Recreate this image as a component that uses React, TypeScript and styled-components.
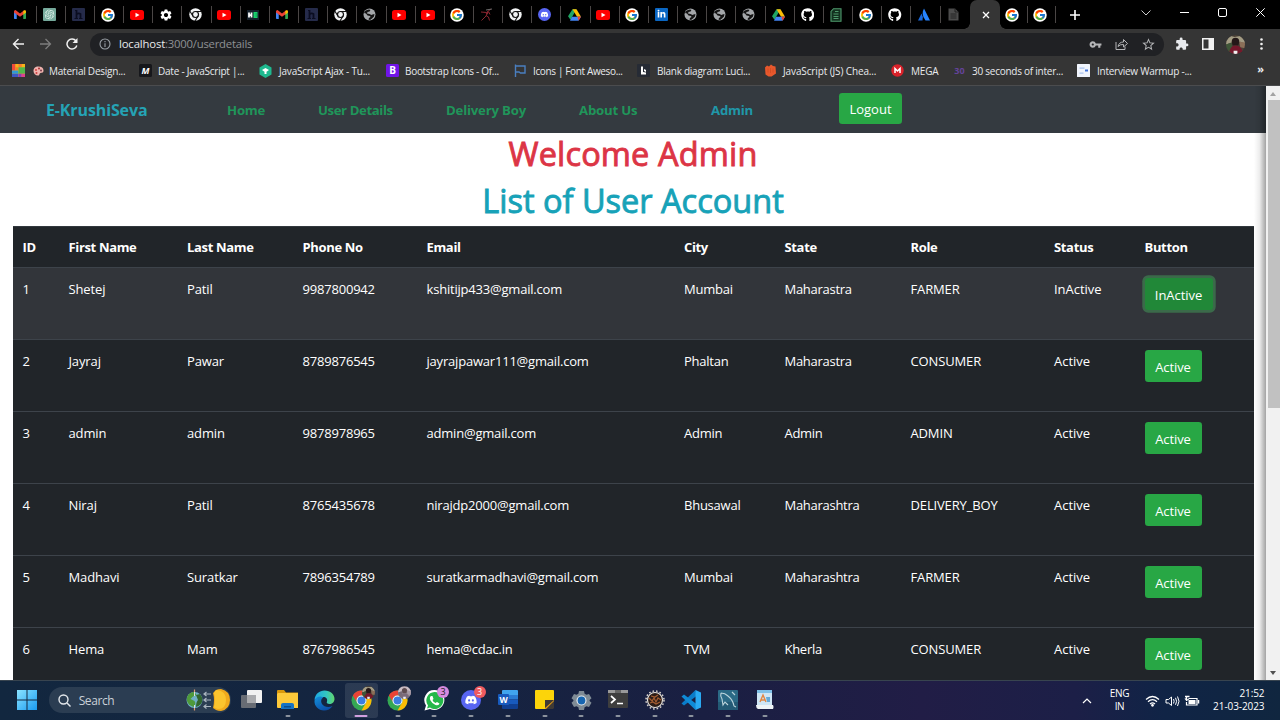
import React from 'react';
import styled, { createGlobalStyle, css } from 'styled-components';
import { FcGoogle } from 'react-icons/fc';
import { FaGithub, FaDiscord, FaLinkedinIn } from 'react-icons/fa';
import { MdExtension, MdVpnKey, MdStarBorder, MdSettings } from 'react-icons/md';
import { SiOpenai } from 'react-icons/si';

const Global = createGlobalStyle`
  * { box-sizing: border-box; }
  body { margin: 0; overflow: hidden; background: #fff; }
  svg { display: block; flex: none; }
`;

const font = css`font-family: 'Open Sans', 'Noto Sans', sans-serif;`;

const Screen = styled.div`
  ${font}
  width: 1280px;
  height: 720px;
  display: flex;
  flex-direction: column;
  overflow: hidden;
`;

/* ---------- browser chrome ---------- */
const TabStrip = styled.div`
  height: 29px;
  flex: none;
  background: #000;
  display: flex;
  align-items: stretch;
  padding-left: 7.5px;
  color: #fff;
`;
const Tab = styled.div<{ $line?: boolean; $w?: number }>`
  width: ${p => p.$w ?? 29.17}px;
  flex: none;
  display: flex;
  align-items: center;
  justify-content: center;
  padding-right: 4px;
  background: ${p => (p.$line === false ? 'none' : 'linear-gradient(#4a4645, #4a4645) no-repeat right 6px / 1px 17px')};
`;
const ActiveTab = styled.div`
  width: 30px;
  flex: none;
  display: flex;
  align-items: center;
  justify-content: center;
  background: #353535;
  border-radius: 7px 7px 0 0;
  padding-left: 3px;
  position: relative;
  &::before, &::after {
    content: '';
    position: absolute;
    bottom: 0;
    width: 6px;
    height: 6px;
  }
  &::before { left: -6px; background: radial-gradient(circle at 0 0, transparent 5.5px, #353535 6px); }
  &::after { right: -6px; background: radial-gradient(circle at 100% 0, transparent 5.5px, #353535 6px); }
`;
const NewTab = styled.div`
  width: 38px;
  display: flex;
  align-items: center;
  justify-content: center;
`;
const WindowControls = styled.div`
  margin-left: auto;
  display: flex;
  align-items: center;
  height: 25px;
  padding-right: 15px;
  gap: 29px;
`;
const Toolbar = styled.div`
  height: 28px;
  flex: none;
  background: #353535;
  display: flex;
  align-items: center;
  color: #e8eaed;
  padding: 2px 16px 0 12px;
`;
const NavIcons = styled.div`
  display: flex;
  width: 78px;
  gap: 14px;
`;
const Omnibox = styled.div`
  width: 1074px;
  height: 23px;
  border-radius: 12px;
  background: #202124;
  display: flex;
  align-items: center;
  padding: 0 8px 0 9px;
`;
const Url = styled.div`
  font-size: 11.3px;
  line-height: 20px;
  color: #8f9194;
  margin: 0 0 0 8px;
  letter-spacing: -0.22px;
  span { color: #e8eaed; letter-spacing: -0.14px; }
`;
const OmniActions = styled.div`
  margin-left: auto;
  display: flex;
  align-items: center;
  gap: 13px;
  color: #b4b5b7;
`;
const ToolbarActions = styled.div`
  margin-left: 11px;
  display: flex;
  align-items: center;
`;
const Avatar = styled.div`
  width: 19px;
  height: 19px;
  border-radius: 50%;
  overflow: hidden;
  margin: 0 15px 0 12px;
`;
const Bookmarks = styled.div`
  height: 29px;
  flex: none;
  background: #353535;
  border-bottom: 1px solid #4b4c4e;
  display: flex;
  align-items: center;
  padding: 0 0 1px 12px;
  color: #e8eaed;
  font-size: 10px;
`;
const Bookmark = styled.div<{ $w: number; $ls?: number; $gap?: number }>`
  width: ${p => p.$w}px;
  flex: none;
  display: flex;
  align-items: center;
  gap: ${p => p.$gap ?? 6}px;
  white-space: nowrap;
  letter-spacing: ${p => p.$ls ?? -0.2}px;
`;
const Badge = styled.span<{ $bg: string; $fg?: string; $italic?: boolean; $size?: number }>`
  width: 13px;
  height: 13px;
  flex: none;
  background: ${p => p.$bg};
  color: ${p => p.$fg ?? '#fff'};
  border-radius: 1.5px;
  font-size: ${p => p.$size ?? 9}px;
  font-style: ${p => (p.$italic ? 'italic' : 'normal')};
  font-weight: 700;
  line-height: 13px;
  letter-spacing: 0;
  text-align: center;
`;
const More = styled.div`
  margin-left: auto;
  padding-right: 16px;
  font-size: 11px;
  font-weight: 700;
  line-height: 20px;
  margin-top: -3px;
`;

/* ---------- web page ---------- */
const Viewport = styled.div`
  flex: 1;
  min-height: 0;
  display: flex;
`;
const Page = styled.div`
  width: 1266px;
  overflow: hidden;
  background: #fff;
  position: relative;
  &::after {
    content: '';
    position: absolute;
    top: 0;
    right: 0;
    bottom: 0;
    width: 12px;
    background: linear-gradient(to right, rgba(0,0,0,0), rgba(0,0,0,.07) 45%, rgba(0,0,0,.36));
  }
`;
const Navbar = styled.nav`
  height: 47px;
  background: #343a40;
  display: flex;
  align-items: center;
  font-weight: 700;
`;
const Brand = styled.div`
  width: 227px;
  padding-left: 46px;
  color: #25a3b5;
  font-size: 16px;
  letter-spacing: -0.12px;
`;
const NavLink = styled.div<{ $w: number; $info?: boolean; $ls?: number }>`
  width: ${p => p.$w}px;
  flex: none;
  white-space: nowrap;
  font-size: 13.2px;
  letter-spacing: ${p => p.$ls ?? -0.2}px;
  color: ${p => (p.$info ? '#2097a9' : '#20955a')};
`;
const Btn = styled.button<{ $focus?: boolean; $logout?: boolean }>`
  ${font}
  display: block;
  height: ${p => (p.$logout ? 31 : 32)}px;
  width: ${p => (p.$logout ? 63 : p.$focus ? 68 : 57)}px;
  padding: 2px 0 0;
  border: 0;
  border-radius: 3.3px;
  background: ${p => (p.$focus ? '#218838' : '#28a745')};
  color: #fff;
  font-size: 13px;
  letter-spacing: ${p => (p.$focus ? -0.05 : p.$logout ? 0 : -0.08)}px;
  line-height: ${p => (p.$logout ? 29 : 30)}px;
  white-space: nowrap;
  margin-top: ${p => (p.$logout ? -2 : 0)}px;
  ${p => p.$focus && css`box-shadow: 0 0 0 2.7px rgba(72, 180, 97, .42);`}
`;
const Heading = styled.h1<{ $color: string; $ls: number }>`
  margin: 0;
  height: 46.6px;
  line-height: 41px;
  font-size: 32.5px;
  font-weight: 500;
  text-align: center;
  color: ${p => p.$color};
  letter-spacing: ${p => p.$ls}px;
  -webkit-text-stroke: .9px ${p => p.$color};
`;
const Table = styled.table`
  width: 1240.5px;
  margin-left: 13px;
  border-collapse: collapse;
  table-layout: fixed;
  color: #fff;
  background: #212529;
  font-size: 13px;
`;
const HeadCell = styled.th<{ $w: number; $ls?: number }>`
  width: ${p => p.$w}px;
  height: 41px;
  padding: 0 0 0 9.5px;
  text-align: left;
  font-weight: 700;
  letter-spacing: ${p => p.$ls ?? -0.34}px;
  border-top: 1px solid #32383e;
`;
const Row = styled.tr<{ $hover?: boolean }>`
  height: 72px;
  background: ${p => (p.$hover ? '#32353a' : 'transparent')};
`;
const Cell = styled.td<{ $ls: number }>`
  padding: 9.5px 0 0 9.5px;
  line-height: 23px;
  vertical-align: top;
  white-space: nowrap;
  border-top: 1px solid #3d434a;
  letter-spacing: ${p => p.$ls}px;
`;
const Scrollbar = styled.div`
  width: 14px;
  background: #f1f1f1;
  display: flex;
  flex-direction: column;
  align-items: center;
  padding: 6px 0 5px;
`;
const Thumb = styled.div`
  width: 12px;
  height: 308px;
  margin: 4px 0 auto 1px;
  background: #c1c1c1;
`;

/* ---------- taskbar ---------- */
const Taskbar = styled.div`
  height: 40px;
  flex: none;
  display: flex;
  background: linear-gradient(90deg, #12273f 0%, #152440 35%, #1a1f42 55%, #211d46 72%, #1c1f47 84%, #102446 91%, #10263f 100%);
  border-top: 1px solid #38444f;
  padding-left: 9px;
  color: #fff;
`;
const Slot = styled.div<{ $active?: boolean; $running?: boolean }>`
  width: 33px;
  height: 35px;
  margin: 2px 1.85px 0;
  border-radius: 3px;
  flex: none;
  display: flex;
  justify-content: center;
  padding-top: 7px;
  position: relative;
  background: ${p => (p.$active ? 'rgba(255,255,255,.1)' : 'none')};
  ${p => (p.$running || p.$active) && css`
    &::after {
      content: '';
      position: absolute;
      bottom: 1px;
      left: 50%;
      width: ${p.$active ? 13 : 5}px;
      height: 2px;
      border-radius: 1px;
      transform: translateX(-50%);
      background: ${p.$active ? '#d2a1e0' : '#8c939e'};
    }`}
`;
const Search = styled.div`
  width: 182px;
  height: 26px;
  margin: 6px 2px 0 3px;
  border-radius: 13px;
  background: #2b3d52;
  display: flex;
  align-items: center;
  padding-left: 9px;
  font-size: 12px;
  letter-spacing: -0.4px;
  color: #c9d0d8;
  svg:first-child { margin-right: 8px; }
  svg:last-child { margin-left: auto; }
`;
const Count = styled.div<{ $bg: string; $fg: string }>`
  position: absolute;
  top: 3px;
  right: 2px;
  width: 12px;
  height: 12px;
  border-radius: 50%;
  background: ${p => p.$bg};
  color: ${p => p.$fg};
  font-size: 9px;
  line-height: 12px;
  text-align: center;
`;
const AccountDot = styled.div`
  position: absolute;
  top: 3px;
  right: 3px;
  width: 13px;
  height: 13px;
  border-radius: 50%;
  overflow: hidden;
`;
const Tray = styled.div`
  margin-left: auto;
  display: flex;
  align-items: center;
  padding-right: 15.5px;
  font-size: 10px;
  line-height: 13.4px;
`;
const Lang = styled.div`
  width: 24px;
  margin: -1px 13px 0 16px;
  text-align: center;
  letter-spacing: -0.3px;
`;
const Clock = styled.div`
  width: 64px;
  margin-top: -1px;
  text-align: right;
  white-space: nowrap;
  letter-spacing: -0.08px;
`;

/* ---------- drawings ---------- */
const Gmail = () => (
  <svg width="12" height="9" viewBox="0 0 24 18">
    <path d="M0 2v14.500Q0 18 1.500 18H5.500V8z" fill="#4285f4" />
    <path d="M24 2v14.500Q24 18 22.500 18H18.500V8z" fill="#34a853" />
    <path d="M0 3Q0 0 3 0L12 7 21 0 18.500 9 12 13.500 5.500 9 0 5z" fill="#ea4335" />
    <path d="M18.500 2.200 20.500.7Q24-.8 24 3v2l-5.500 4.300z" fill="#fbbc04" />
  </svg>
);
const Youtube = () => (
  <svg width="14" height="10" viewBox="0 0 28 20">
    <rect width="28" height="20" rx="5" fill="#f00" />
    <path d="M11 5.500v9l8-4.500z" fill="#fff" />
  </svg>
);
const ChromeMono = () => (
  <svg width="13" height="13" viewBox="0 0 26 26">
    <circle cx="13" cy="13" r="12.500" fill="#f1f3f4" />
    <circle cx="13" cy="13" r="6" fill="#f1f3f4" stroke="#111" strokeWidth="2.400" />
    <path d="M13 7h12M7.800 16 1.500 6M18.200 16 12 26" stroke="#111" strokeWidth="2.200" />
  </svg>
);
const Globe = () => (
  <svg width="13" height="13" viewBox="0 0 26 26">
    <circle cx="13" cy="13" r="12" fill="#a4a7aa" />
    <path d="M12 3l3 1-2 3-4 1-1 3 5 1 4 2 2-1 4-1-1 5-4 4-4 3-3-1 1-3 3-2-1-2-5-1-3-4-4-1 2-4 4-2z" fill="#141414" />
    <path d="M16 4l5 4-4 2-3-2z" fill="#a4a7aa" />
  </svg>
);
const Chrome = () => (
  <svg width="21" height="21" viewBox="0 0 42 42">
    <circle cx="21" cy="21" r="20" fill="#34a853" />
    <path d="M3.700 11A20 20 0 0 1 38.300 11H21A10 10 0 0 0 12.300 26z" fill="#ea4335" />
    <path d="M38.300 11A20 20 0 0 1 21 41L29.700 26A10 10 0 0 0 21 11z" fill="#fbbc04" />
    <circle cx="21" cy="21" r="10" fill="#fff" />
    <circle cx="21" cy="21" r="8" fill="#3b7de0" />
  </svg>
);
const HMark = () => (
  <svg width="13" height="13" viewBox="0 0 26 26">
    <rect width="26" height="26" rx="2" fill="#252b4a" />
    <path d="M9 4v18M9 13q4-4 8-1v10" fill="none" stroke="#0a0d20" strokeWidth="3.500" />
    <path d="M5 21h7M14 21h7M6 5h4" stroke="#0a0d20" strokeWidth="2" />
  </svg>
);
const Gpt = () => (
  <svg width="13" height="13" viewBox="0 0 26 26">
    <rect width="26" height="26" rx="2" fill="#75a99b" />
    <SiOpenai x="3" y="3" size="20" color="#e2f2ec" />
  </svg>
);
const Drive = () => (
  <svg width="13" height="12" viewBox="0 0 26 23">
    <path d="M9 0h8L5 21 0 14z" fill="#1fa463" />
    <path d="M9 0h8l9 15h-8z" fill="#fbbc04" />
    <path d="M8 15h18l-5 8H4z" fill="#4285f4" />
    <path d="M19 15h7l-5 8z" fill="#ea4335" />
  </svg>
);
const HackerEarth = () => (
  <svg width="12" height="10" viewBox="0 0 24 20">
    <rect width="24" height="20" fill="#15202b" />
    <path d="M4 5v10M9 5v10M4 10h5" stroke="#fff" strokeWidth="3.500" />
    <path d="M13 4h8v12h-8z" fill="#18d26e" />
    <path d="M17 8h3M17 12h3" stroke="#0b5934" strokeWidth="1" />
  </svg>
);
const Archer = () => (
  <svg width="13" height="13" viewBox="0 0 26 26" fill="none" stroke="#8a2630" strokeWidth="2">
    <path d="M2 8l11 1 9-7M15 9l-3 7-9 9M12 15l5 3 2 7M17 7l3 6" />
    <path d="M13 12l3-4" strokeWidth="4" />
    <path d="M12 4l12-2" stroke="#6c6c6c" />
  </svg>
);
const Atlassian = () => (
  <svg width="12" height="13" viewBox="0 0 24 26">
    <path d="M7 11 0 25h9Q11 17 7 11z" fill="#1868db" />
    <path d="M12 1 24 25h-9Q5 12 12 1z" fill="#2684ff" />
  </svg>
);
const GreenDoc = () => (
  <svg width="12" height="14" viewBox="0 0 24 28" fill="#12301f" stroke="#4f9a6d" strokeWidth="2.200">
    <path d="M7 1.500h15v25H2V7zM7 12h10M7 17h10M7 21h10M10 7h7" />
  </svg>
);
const DimDoc = () => (
  <svg width="11" height="13" viewBox="0 0 22 26">
    <path d="M1 1h13l7 7v17H1z" fill="#4c4c4c" />
    <path d="M14 1v7h7M5 12h12M5 16h12M5 20h12" stroke="#161616" strokeWidth="1.600" fill="none" />
  </svg>
);
const LinkedIn = () => (
  <svg width="13" height="13" viewBox="0 0 26 26">
    <rect width="26" height="26" rx="2" fill="#0a66c2" />
    <FaLinkedinIn x="4" y="3" size="18" color="#fff" />
  </svg>
);
const DiscordDot = ({ s }: { s: number }) => (
  <svg width={s} height={s} viewBox="0 0 26 26">
    <circle cx="13" cy="13" r="13" fill="#5865f2" />
    <FaDiscord x="5" y="5" size="16" color="#fff" />
  </svg>
);
const GoogleDot = () => (
  <svg width="14" height="14" viewBox="0 0 28 28">
    <circle cx="14" cy="14" r="13.500" fill="#fff" />
    <FcGoogle x="2" y="2" size="24" />
  </svg>
);
const Photo = ({ alt }: { alt?: boolean }) => (
  <svg width="100%" height="100%" viewBox="0 0 20 20">
    <rect width="20" height="20" fill={alt ? '#9a8e98' : '#4b4036'} />
    <path d="M0 5 5 1l4 1 6-1 5 5v3l-5-2-4 2-5-1-6 2z" fill={alt ? '#c9bcc4' : '#a39c84'} />
    <path d="M0 10l6-2 1 12H0z" fill={alt ? '#776977' : '#3e5637'} />
    <path d="M14 7l6 1v6l-5-1z" fill={alt ? '#a79aa5' : '#8b6f58'} />
    <path d="M6 7q0-4 4-4t4 4l-1 4H7z" fill={alt ? '#5e4b50' : '#241818'} />
    <path d="M3 20q1-9 7-9 7 0 8 9z" fill={alt ? '#7b6b7a' : '#74182b'} />
    <path d="M8 16.500h4V20H8z" fill="#eee" />
  </svg>
);
const Grid = () => (
  <svg width="13" height="13" viewBox="0 0 4 4">
    <path d="M0 0h4v4H0z" fill="#f6b319" />
    <path d="M0 0h1v2H0z" fill="#ef4b3b" /><path d="M2 0h1v1H2zM1 1h1v1H1z" fill="#f77e2d" />
    <path d="M0 2h2v1H0z" fill="#2e9bd6" /><path d="M0 3h2v1H0z" fill="#3c57c4" />
    <path d="M2 1h2v2H2z" fill="#51b84b" /><path d="M2 3h1v1H2z" fill="#8a3ab9" /><path d="M3 3h1v1H3z" fill="#e0408c" />
  </svg>
);
const Palette = () => (
  <svg width="11" height="10" viewBox="0 0 22 20">
    <path d="M11 1C4 1 1 5 1 10s4 9 9 9c4 0 2-4 5-5s6 0 6-5-4-8-10-8z" fill="#f0b3ae" />
    <circle cx="6" cy="8" r="2" fill="#d84343" /><circle cx="12" cy="5" r="2" fill="#a33" /><circle cx="16" cy="9" r="2" fill="#7a3c4a" /><circle cx="7" cy="14" r="2" fill="#c44" />
  </svg>
);
const Hex = () => (
  <svg width="13" height="14" viewBox="0 0 26 28">
    <path d="M13 0 25 7v14l-12 7L1 21V7z" fill="#1fb98f" />
    <path d="M6 12l7-4 7 4-7 5zM11 16h4v4h-4z" fill="#fff" />
  </svg>
);
const Flag = () => (
  <svg width="13" height="13" viewBox="0 0 26 26" fill="none" stroke="#4a7fc0" strokeWidth="2.800">
    <path d="M3 1v25M3 4h19v14h-9l-3-2H3" />
  </svg>
);
const Lucid = () => (
  <svg width="13" height="13" viewBox="0 0 26 26">
    <rect width="26" height="26" rx="2" fill="#262b35" />
    <path d="M8 5h4v11l6 1v4H8zM14 10l4 2v4l-4-2z" fill="#fff" />
  </svg>
);
const Cheat = () => (
  <svg width="13" height="13" viewBox="0 0 26 26">
    <path d="M2 7l4-4 4 2 4-4 4 3 5 1 1 14-9 6H9l-6-4z" fill="#e8582c" />
    <path d="M8 9v8M13 8v10M18 9v8" stroke="#d04a20" strokeWidth="1.500" />
  </svg>
);
const Warmup = () => (
  <svg width="13" height="13" viewBox="0 0 26 26">
    <rect width="26" height="26" rx="1" fill="#f1f5fd" />
    <path d="M5 8h10M5 18h8" stroke="#a9c2ee" strokeWidth="2.500" /><path d="M16 13h6" stroke="#3f72db" strokeWidth="4" />
  </svg>
);
const Mega = () => (
  <svg width="13" height="13" viewBox="0 0 26 26">
    <circle cx="13" cy="13" r="12.500" fill="#d9222a" />
    <path d="M8 18V9l5 5 5-5v9" fill="none" stroke="#fff" strokeWidth="3" />
  </svg>
);
const Windows = () => (
  <svg width="20" height="20" viewBox="0 0 20 20">
    <defs><linearGradient id="win" x2="1" y2="1"><stop stopColor="#8ae3ff" /><stop offset="1" stopColor="#1a9bf0" /></linearGradient></defs>
    <path d="M0 0h9.500v9.500H0zM10.500 0H20v9.500h-9.500zM0 10.500h9.500V20H0zM10.500 10.500H20V20h-9.500z" fill="url(#win)" />
  </svg>
);
const Equinox = () => (
  <svg width="46" height="26" viewBox="0 0 46 26">
    <path d="M9.500 2.500v21" stroke="#d99b72" strokeWidth="1.200" />
    <circle cx="9.500" cy="13" r="8" fill="#6fb0c6" />
    <path d="M9.500 5a8 8 0 0 0-7 4q-2 5 2 9l4 2q3-3 1-6l-4-2q2-3 6-4z" fill="#4f9a3b" />
    <path d="M11 8l4-1q4 5 1 10-3 3-5 3 0-5 2-7z" fill="#33662f" />
    <path d="M9.500 5v4M9.500 18v3" stroke="#d8dde2" strokeWidth="1" />
    <path d="M19 7h7M19 13h7M19 19.500h7M21.500 5 19 7l2.500 2M21.500 11 19 13l2.500 2M21.500 17.500l-2.500 2 2.500 2" fill="none" stroke="#aab5bf" strokeWidth="1.200" />
    <path d="M31 3q2-1 5-1 9 2 9 11t-9 11q-3 0-5-1l-3-2q2-8 0-15z" fill="#f0a91d" />
    <path d="M32 3q9 1 9 10t-8 9q-4-1-4-2 2-7 0-14 1-3 3-3z" fill="#fbc42e" />
  </svg>
);
const TaskView = () => (
  <svg width="21" height="19" viewBox="0 0 21 19">
    <rect x="6" y="0" width="15" height="13" rx="1" fill="#f1f1f1" />
    <rect x="0" y="5" width="15" height="13" rx="1" fill="#77797e" fillOpacity=".85" />
    <path d="M6 5h9v8H6z" fill="#a9aaad" />
  </svg>
);
const Explorer = () => (
  <svg width="21" height="19" viewBox="0 0 21 19">
    <path d="M0 1q0-1 1-1h6l2 2.500h12V6H0z" fill="#d9980c" />
    <path d="M1 3h20v15H1q-1 0-1-1V4z" fill="#fdc93a" />
    <path d="M4 19v-4q0-2 2-2h9q2 0 2 2v4z" fill="#1672c4" /><path d="M7 16h7v1.500H7z" fill="#0b4c8c" />
  </svg>
);
const Edge = () => (
  <svg width="21" height="21" viewBox="0 0 42 42">
    <defs>
      <linearGradient id="ed1" x2="1"><stop stopColor="#1ba7e5" /><stop offset=".6" stopColor="#34c6c0" /><stop offset="1" stopColor="#63d76b" /></linearGradient>
      <linearGradient id="ed2" x2=".6" y2="1"><stop stopColor="#1391dd" /><stop offset="1" stopColor="#0c4fa8" /></linearGradient>
    </defs>
    <path d="M1 20C2 8 11 1 21 1c12 0 20 8 20 17 0 6-5 10-10 10-4 0-7-2-5-5 2-6-3-10-9-9C9 14 3 18 1 20z" fill="url(#ed1)" />
    <path d="M1 21C4 14 12 11 19 15c-5 2-6 8-3 13 4 6 13 8 21 4-4 6-10 9-17 9C9 41 0 32 1 21z" fill="url(#ed2)" />
  </svg>
);
const Whatsapp = () => (
  <svg width="21" height="21" viewBox="0 0 42 42">
    <path d="M21 0a20 20 0 1 1-9 38L1 41l3-10A20 20 0 0 1 21 0z" fill="#fff" />
    <path d="M21 4a17 17 0 1 1-9 31l-6 2 2-6A17 17 0 0 1 21 4z" fill="#25b84a" />
    <path d="M14 12q-4 3-1 9t10 9q7 2 8-3l-5-3-3 2q-5-2-6-6l2-2-2-6z" fill="#fff" />
  </svg>
);
const Word = () => (
  <svg width="20" height="19" viewBox="0 0 20 19">
    <path d="M5 0h14q1 0 1 1v5H4V1q0-1 1-1z" fill="#41a5ee" /><path d="M4 5h16v4.500H4z" fill="#2b7cd3" /><path d="M4 9.500h16V14H4z" fill="#185abd" /><path d="M4 14h16v4q0 1-1 1H5q-1 0-1-1z" fill="#103f91" />
    <rect y="4" width="11" height="11" rx="1" fill="#185abd" />
    <text x="5.500" y="12.500" textAnchor="middle" fontSize="8.500" fontWeight="700" fill="#fff" fontFamily="Open Sans">W</text>
  </svg>
);
const Notes = () => (
  <svg width="19" height="19" viewBox="0 0 19 19">
    <path d="M0 1q0-1 1-1h17q1 0 1 1v9l-9 9H1q-1 0-1-1z" fill="#fcd40a" /><path d="M10 10h9v8l-1 1h-8z" fill="#3f3a35" /><path d="M19 10v1l-8 8h-1v-1z" fill="#e59a12" />
  </svg>
);
const Settings = () => (
  <svg width="21" height="21" viewBox="0 0 21 21">
    <path d="M8 1h5l.6 2.700 1.900 1.100L18 4l2.500 4.200-1.900 1.800v1l1.900 1.800L18 17l-2.500-.8-1.900 1.100L13 20H8l-.6-2.700-1.900-1.100L3 17 .5 12.800l1.900-1.800v-1L.5 8.200 3 4l2.500.8 1.900-1.100z" fill="#7f8b95" />
    <circle cx="10.500" cy="10.500" r="5" fill="#e9eef2" /><circle cx="10.500" cy="10.500" r="3.900" fill="#1765b0" />
  </svg>
);
const Terminal = () => (
  <svg width="20" height="18" viewBox="0 0 20 18">
    <rect width="20" height="18" rx="1" fill="#3e3e3e" /><path d="M0 0h20v3H0z" fill="#9a9a9a" /><path d="M7 0h6v3H7z" fill="#666" />
    <path d="M3 6l4 3.500L3 13M9 13.500h6" fill="none" stroke="#fff" strokeWidth="1.700" />
  </svg>
);
const Eclipse = () => (
  <svg width="20" height="20" viewBox="0 0 20 20">
    <circle cx="10" cy="10" r="7.500" fill="#2b1c17" stroke="#e5e1dc" strokeWidth="1.200" />
    <circle cx="10" cy="10" r="9" fill="none" stroke="#d7d2cc" strokeWidth="1.500" strokeDasharray="1.600 2" />
    <path d="M4 8l3 3 2-3 2 4 2-4 3 2M5 13l3-1 3 2 4-2M6 6l4 1 3-2" fill="none" stroke="#a45d31" strokeWidth="1.200" />
  </svg>
);
const VsCode = () => (
  <svg width="20" height="20" viewBox="0 0 40 40">
    <path d="M29 0 31 12 6 31l-5-4z" fill="#0a7cc9" />
    <path d="M1 13l5-4 25 19-2 12z" fill="#0f8ad6" />
    <path d="M29 0 40 5v30l-11 5z" fill="#2aaaf2" />
  </svg>
);
const Workbench = () => (
  <svg width="20" height="20" viewBox="0 0 20 20">
    <rect width="20" height="20" rx="1" fill="#2b6a86" /><path d="M0 12h20v7q0 1-1 1H1q-1 0-1-1z" fill="#235a75" />
    <path d="M3 3q4 0 7 3 5 4 6 10l2 1M3 3q-1 3 1 6l1 6 2-3 3 3M14 2l3 3" fill="none" stroke="#bcd5dd" strokeWidth="1.100" />
  </svg>
);
const Paper = () => (
  <svg width="18" height="19" viewBox="0 0 18 19">
    <path d="M1 0h15v17H1z" fill="#cfe6f5" /><path d="M1 0h15v3H1z" fill="#7fc0e8" /><path d="M0 15h17q1 2 0 4H2q-2-1-2-4z" fill="#eef3f6" />
    <path d="M4 12l3-7 3 7M5 10h4" stroke="#e28643" strokeWidth="1.400" fill="none" /><path d="M10 7h4v5h-3z" fill="#64a9d8" />
  </svg>
);

const tabs = ('gmail gpt h google yt cog chrome yt he gmail h chrome globe yt yt google archer chrome discord drive yt google li globe globe globe drive github doc google github atl dim').split(' ');
const tabIcon: Record<string, React.ReactNode> = {
  gmail: <Gmail />, gpt: <Gpt />, h: <HMark />, google: <GoogleDot />, yt: <Youtube />, cog: <MdSettings size={14} color="#fff" />,
  chrome: <ChromeMono />, he: <HackerEarth />, globe: <Globe />, archer: <Archer />,
  discord: <DiscordDot s={13} />, drive: <Drive />, li: <LinkedIn />, github: <FaGithub size={13.5} color="#fff" />,
  doc: <GreenDoc />, atl: <Atlassian />, dim: <DimDoc />,
};

const columns: [string, number][] = [
  ['ID', 46], ['First Name', 118.5], ['Last Name', 115.5], ['Phone No', 124], ['Email', 257.5],
  ['City', 100.5], ['State', 126], ['Role', 143.5], ['Status', 90.5], ['Button', 118.5],
];
const spacing = [0, -0.12, -0.12, -0.2, -0.2, -0.24, -0.28, -0.14, -0.02, 0];
const users = [
  ['1', 'Shetej', 'Patil', '9987800942', 'kshitijp433@gmail.com', 'Mumbai', 'Maharastra', 'FARMER', 'InActive'],
  ['2', 'Jayraj', 'Pawar', '8789876545', 'jayrajpawar111@gmail.com', 'Phaltan', 'Maharastra', 'CONSUMER', 'Active'],
  ['3', 'admin', 'admin', '9878978965', 'admin@gmail.com', 'Admin', 'Admin', 'ADMIN', 'Active'],
  ['4', 'Niraj', 'Patil', '8765435678', 'nirajdp2000@gmail.com', 'Bhusawal', 'Maharashtra', 'DELIVERY_BOY', 'Active'],
  ['5', 'Madhavi', 'Suratkar', '7896354789', 'suratkarmadhavi@gmail.com', 'Mumbai', 'Maharashtra', 'FARMER', 'Active'],
  ['6', 'Hema', 'Mam', '8767986545', 'hema@cdac.in', 'TVM', 'Kherla', 'CONSUMER', 'Active'],
];

export default function App() {
  return (
    <Screen>
      <Global />
      <TabStrip>
        {tabs.map((t, i) => <Tab key={i} $line={i < tabs.length - 1}>{tabIcon[t]}</Tab>)}
        <ActiveTab>
          <svg width="8" height="8" viewBox="0 0 8 8"><path d="M1 1l6 6M7 1 1 7" stroke="#fff" strokeWidth="1.300" /></svg>
        </ActiveTab>
        <Tab $w={28}><GoogleDot /></Tab>
        <Tab $w={28}><GoogleDot /></Tab>
        <NewTab>
          <svg width="10" height="10" viewBox="0 0 10 10"><path d="M5 0v10M0 5h10" stroke="#fff" strokeWidth="1.600" /></svg>
        </NewTab>
        <WindowControls>
          <svg width="10" height="6" viewBox="0 0 10 6"><path d="M.5.5 5 5 9.500.5" fill="none" stroke="#ccc" /></svg>
          <svg width="9" height="9" viewBox="0 0 9 9"><path d="M0 4.500h9" stroke="#fff" /></svg>
          <svg width="9" height="9" viewBox="0 0 9 9"><rect x=".5" y=".5" width="8" height="8" rx="1.500" fill="none" stroke="#fff" /></svg>
          <svg width="9" height="9" viewBox="0 0 9 9"><path d="M.3.300 8.700 8.700M8.700.300.300 8.700" stroke="#fff" /></svg>
        </WindowControls>
      </TabStrip>
      <Toolbar>
        <NavIcons>
          <svg width="13" height="12" viewBox="0 0 13 12" fill="none" stroke="#f1f1f1" strokeWidth="1.400"><path d="M12 6H1.500M6.500 1l-5 5 5 5" /></svg>
          <svg width="13" height="12" viewBox="0 0 13 12" fill="none" stroke="#7d7d7d" strokeWidth="1.300"><path d="M1 6h10.500M6.500 1l5 5-5 5" /></svg>
          <svg width="12" height="12" viewBox="0 0 12 12" fill="none" stroke="#f1f1f1" strokeWidth="1.500"><path d="M10.800 7.500A5 5 0 1 1 10 3" /><path d="M11.500 0v5h-5z" fill="#f1f1f1" stroke="none" /></svg>
        </NavIcons>
        <Omnibox>
          <svg width="12" height="12" viewBox="0 0 12 12" fill="none" stroke="#9aa0a6" strokeWidth="1.100"><circle cx="6" cy="6" r="5" /><path d="M6 5.300V9M6 3v1.200" /></svg>
          <Url><span>localhost</span>:3000/userdetails</Url>
          <OmniActions>
            <MdVpnKey size={13} />
            <svg width="13" height="12" viewBox="0 0 13 12" fill="none" stroke="currentColor"><path d="M1 4v7.500h9V8.500M3 8.500Q4 4 8.500 4V1.500l4 4-4 3.500V6.500Q5 6.200 3 8.500z" /></svg>
            <MdStarBorder size={15} />
          </OmniActions>
        </Omnibox>
        <ToolbarActions>
          <MdExtension size={14} />
          <svg width="25" height="12" viewBox="-13 0 25 12"><path d="M0 0h12v12H0zM1.500 1.500v9h5v-9z" fill="#f1f1f1" fillRule="evenodd" /></svg>
          <Avatar><Photo /></Avatar>
          <svg width="3" height="12" viewBox="0 0 3 12" fill="#f1f1f1"><circle cx="1.500" cy="1.500" r="1.300" /><circle cx="1.500" cy="6" r="1.300" /><circle cx="1.500" cy="10.500" r="1.300" /></svg>
        </ToolbarActions>
      </Toolbar>
      <Bookmarks>
        <Bookmark $w={21}><Grid /></Bookmark>
        <Bookmark $w={106} $ls={-0.24} $gap={5}><Palette />Material Design...</Bookmark>
        <Bookmark $w={120} $ls={-0.24}><Badge $bg="#16171b" $italic>M</Badge>Date - JavaScript |...</Bookmark>
        <Bookmark $w={127} $gap={7}><Hex />JavaScript Ajax - Tu...</Bookmark>
        <Bookmark $w={128} $ls={-0.3}><Badge $bg="#7014e8" $size={10}>B</Badge>Bootstrap Icons - Of...</Bookmark>
        <Bookmark $w={123} $ls={-0.36}><Flag />Icons | Font Aweso...</Bookmark>
        <Bookmark $w={127} $gap={7} $ls={-0.26}><Lucid />Blank diagram: Luci...</Bookmark>
        <Bookmark $w={127} $ls={-0.12} $gap={6}><Cheat />JavaScript (JS) Chea...</Bookmark>
        <Bookmark $w={62} $gap={7}><Mega />MEGA</Bookmark>
        <Bookmark $w={124} $ls={-0.25}><Badge $bg="transparent" $fg="#64439a">30</Badge>30 seconds of inter...</Bookmark>
        <Bookmark $w={130} $gap={7} $ls={-0.25}><Warmup />Interview Warmup -...</Bookmark>
        <More>»</More>
      </Bookmarks>
      <Viewport>
        <Page>
          <Navbar>
            <Brand>E-KrushiSeva</Brand>
            <NavLink $w={91}>Home</NavLink>
            <NavLink $w={128} $ls={-0.4}>User Details</NavLink>
            <NavLink $w={133}>Delivery Boy</NavLink>
            <NavLink $w={132}>About Us</NavLink>
            <NavLink $w={128} $info>Admin</NavLink>
            <Btn $logout>Logout</Btn>
          </Navbar>
          <Heading $color="#dc3545" $ls={0.15}>Welcome Admin</Heading>
          <Heading $color="#17a2b8" $ls={0}>List of User Account</Heading>
          <Table>
            <thead>
              <tr>{columns.map(([c, w]) => <HeadCell key={c} $w={w}>{c}</HeadCell>)}</tr>
            </thead>
            <tbody>
              {users.map((u, r) => (
                <Row key={u[0]} $hover={r === 0}>
                  {u.map((v, i) => <Cell key={i} $ls={spacing[i]}>{v}</Cell>)}
                  <Cell $ls={0}><Btn $focus={r === 0}>{u[8]}</Btn></Cell>
                </Row>
              ))}
            </tbody>
          </Table>
        </Page>
        <Scrollbar>
          <svg width="6" height="4" viewBox="0 0 6 4"><path d="M0 4 3 0l3 4z" fill="#a3a3a3" /></svg>
          <Thumb />
          <svg width="6" height="4" viewBox="0 0 6 4"><path d="M0 0h6L3 4z" fill="#505050" /></svg>
        </Scrollbar>
      </Viewport>
      <Taskbar>
        <Slot><Windows /></Slot>
        <Search>
          <svg width="13" height="13" viewBox="0 0 13 13" fill="none" stroke="#e4e8ec" strokeWidth="1.400"><circle cx="5.500" cy="5.500" r="4.500" /><path d="M9 9l3.500 3.500" /></svg>
          Search
          <Equinox />
        </Search>
        <Slot><TaskView /></Slot>
        <Slot $running><Explorer /></Slot>
        <Slot><Edge /></Slot>
        <Slot $active><Chrome /><AccountDot><Photo /></AccountDot></Slot>
        <Slot $running><Chrome /><AccountDot><Photo alt /></AccountDot></Slot>
        <Slot $running><Whatsapp /><Count $bg="#d68be0" $fg="#222">3</Count></Slot>
        <Slot $running><DiscordDot s={20} /><Count $bg="#ee5a5f" $fg="#fff">3</Count></Slot>
        <Slot $running><Word /></Slot>
        <Slot $running><Notes /></Slot>
        <Slot $running><Settings /></Slot>
        <Slot $running><Terminal /></Slot>
        <Slot $running><Eclipse /></Slot>
        <Slot $running><VsCode /></Slot>
        <Slot $running><Workbench /></Slot>
        <Slot $running><Paper /></Slot>
        <Tray>
          <svg width="10" height="6" viewBox="0 0 10 6"><path d="M1 5l4-4 4 4" fill="none" stroke="#fff" strokeWidth="1.200" /></svg>
          <Lang>ENG IN</Lang>
          <svg width="56" height="14" viewBox="0 0 56 14" fill="none" stroke="#fff" strokeWidth="1.200">
            <path d="M1 5.500q6.500-6 13 0M3 7.800q4.500-4.200 9 0M5 10q2.500-2.300 5 0" /><circle cx="7.500" cy="11.300" r=".8" fill="#fff" />
            <path d="M21 5.500h2.500l3-2.500v8.500l-3-2.500H21zM28.500 5q1.300 2.300 0 4.500M30.500 3.800q2.200 3.500 0 7M32.500 2.500q3 4.700 0 9.500" strokeWidth="1" />
            <path d="M44 4.500h8V11H41.500V8" /><path d="M43.500 6h7v4h-7z" fill="#fff" stroke="none" /><path d="M53.500 6v3.500" strokeWidth="1.500" />
            <path d="M41.500 2v5M40 2.500h4.500M40 4.500q2 3 4 0" strokeWidth="1.300" />
          </svg>
          <Clock>21:52<br />21-03-2023</Clock>
        </Tray>
      </Taskbar>
    </Screen>
  );
}
